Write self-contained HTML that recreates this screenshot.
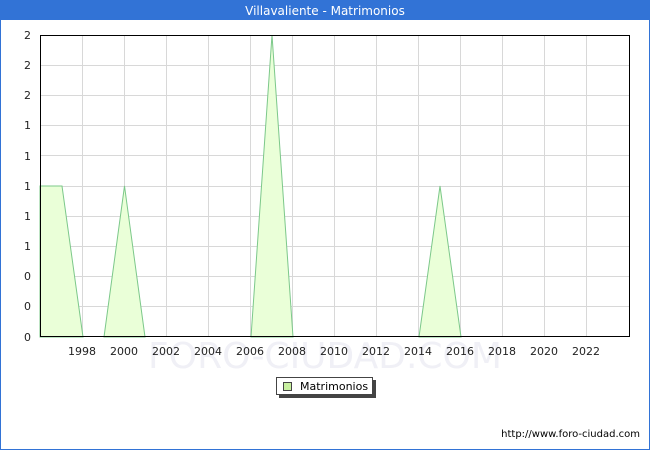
<!DOCTYPE html>
<html><head><style>
body{margin:0;width:650px;height:450px;overflow:hidden;font-family:"DejaVu Sans","Liberation Sans",sans-serif;}
</style></head><body>
<svg width="650" height="450" xmlns="http://www.w3.org/2000/svg" font-family="DejaVu Sans, Liberation Sans, sans-serif">
<rect x="0" y="0" width="650" height="450" fill="#fff"/>
<rect x="0.5" y="0.5" width="649" height="449" fill="none" stroke="#3273d6"/>
<rect x="0" y="0" width="650" height="20" fill="#3273d6"/>
<text x="325" y="15" fill="#fff" font-size="12" text-anchor="middle">Villavaliente - Matrimonios</text>
<g stroke="#d8d8d8" stroke-width="1">
<line x1="40" y1="65.5" x2="630" y2="65.5"/><line x1="40" y1="95.5" x2="630" y2="95.5"/><line x1="40" y1="125.5" x2="630" y2="125.5"/><line x1="40" y1="155.5" x2="630" y2="155.5"/><line x1="40" y1="186.5" x2="630" y2="186.5"/><line x1="40" y1="216.5" x2="630" y2="216.5"/><line x1="40" y1="246.5" x2="630" y2="246.5"/><line x1="40" y1="276.5" x2="630" y2="276.5"/><line x1="40" y1="306.5" x2="630" y2="306.5"/>
<line x1="82.5" y1="35" x2="82.5" y2="337"/><line x1="124.5" y1="35" x2="124.5" y2="337"/><line x1="166.5" y1="35" x2="166.5" y2="337"/><line x1="208.5" y1="35" x2="208.5" y2="337"/><line x1="250.5" y1="35" x2="250.5" y2="337"/><line x1="292.5" y1="35" x2="292.5" y2="337"/><line x1="334.5" y1="35" x2="334.5" y2="337"/><line x1="376.5" y1="35" x2="376.5" y2="337"/><line x1="418.5" y1="35" x2="418.5" y2="337"/><line x1="460.5" y1="35" x2="460.5" y2="337"/><line x1="502.5" y1="35" x2="502.5" y2="337"/><line x1="544.5" y1="35" x2="544.5" y2="337"/><line x1="586.5" y1="35" x2="586.5" y2="337"/>
</g>
<text x="325" y="368" font-size="36" fill="#f0f0f6" text-anchor="middle">FORO-CIUDAD.COM</text>
<g fill="#eaffd8" stroke="#7cc88a" stroke-width="1">
<polygon points="40,337 40,186 62,186 83,337"/>
<polygon points="104,337 124.5,186 145,337"/>
<polygon points="251,337 272,35 293,337"/>
<polygon points="419,337 440,186 461,337"/>
</g>
<rect x="40.5" y="35.5" width="589" height="301" fill="none" stroke="#000"/>
<g font-size="11" fill="#222" text-anchor="end">
<text x="31" y="39">2</text><text x="31" y="69">2</text><text x="31" y="99">2</text><text x="31" y="129">1</text><text x="31" y="160">1</text><text x="31" y="190">1</text><text x="31" y="220">1</text><text x="31" y="250">1</text><text x="31" y="280">0</text><text x="31" y="310">0</text><text x="31" y="341">0</text>
</g>
<g font-size="11" fill="#222" text-anchor="middle">
<text x="82" y="355">1998</text><text x="124" y="355">2000</text><text x="166" y="355">2002</text><text x="208" y="355">2004</text><text x="250" y="355">2006</text><text x="292" y="355">2008</text><text x="334" y="355">2010</text><text x="376" y="355">2012</text><text x="418" y="355">2014</text><text x="460" y="355">2016</text><text x="502" y="355">2018</text><text x="544" y="355">2020</text><text x="586" y="355">2022</text>
</g>
<rect x="279" y="380" width="97" height="18" fill="#444"/>
<rect x="276.5" y="377.5" width="96" height="17" fill="#fff" stroke="#444"/>
<rect x="283.5" y="382.5" width="8" height="8" fill="#c8f0a0" stroke="#444"/>
<text x="300" y="390" font-size="11" fill="#000">Matrimonios</text>
<text x="640" y="437" font-size="10" fill="#000" text-anchor="end">http://www.foro-ciudad.com</text>
</svg>
</body></html>
